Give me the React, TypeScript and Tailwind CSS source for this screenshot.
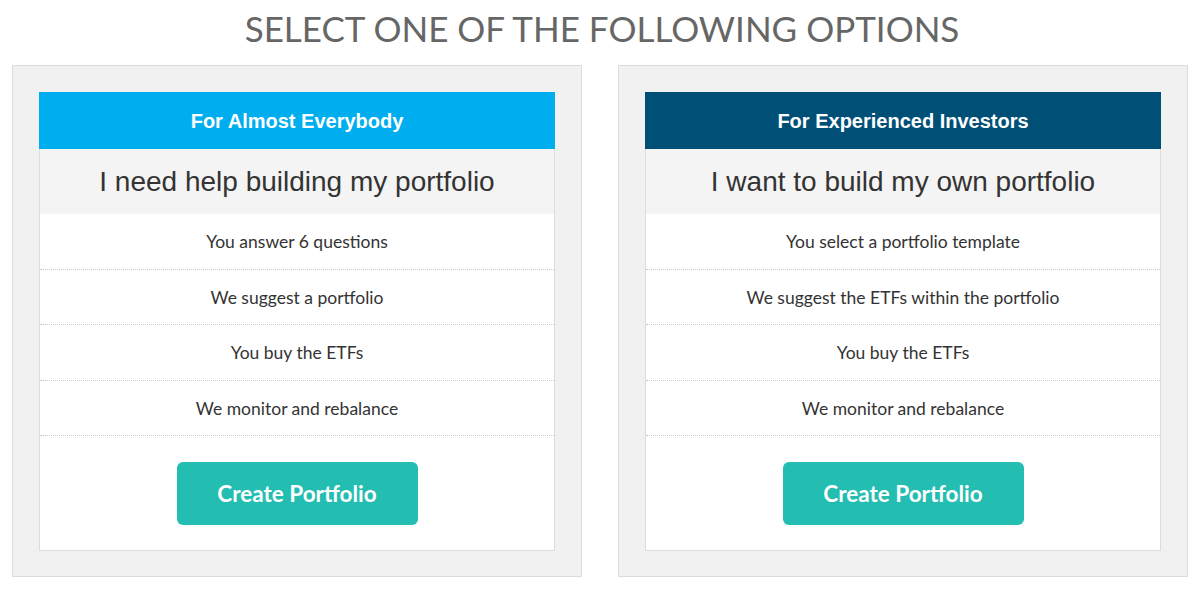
import React from "react";

type Opt = {
  head: string;
  headBg: string;
  title: string;
  items: string[];
};

const opts: Opt[] = [
  {
    head: "For Almost Everybody",
    headBg: "bg-[#00aeef]",
    title: "I need help building my portfolio",
    items: ["You answer 6 questions", "We suggest a portfolio", "You buy the ETFs", "We monitor and rebalance"],
  },
  {
    head: "For Experienced Investors",
    headBg: "bg-[#004f77]",
    title: "I want to build my own portfolio",
    items: [
      "You select a portfolio template",
      "We suggest the ETFs within the portfolio",
      "You buy the ETFs",
      "We monitor and rebalance",
    ],
  },
];

function Panel({ o }: { o: Opt }) {
  return (
    <div className="w-[570px] h-[512px] border border-[#dcdcdc] bg-[#f1f1f1] p-[26px]">
      <div className="h-[459px] border border-[#dcdcdc] bg-white flex flex-col">
        <div
          className={`${o.headBg} h-[57px] -mx-px -mt-px flex items-center justify-center text-white font-bold text-[20px] font-['Liberation_Sans',Arial,sans-serif]`}
        >
          {o.head}
        </div>
        <div className="h-[65px] bg-[#f4f4f4] flex items-center justify-center text-[#333] text-[28px] font-['Liberation_Sans',Arial,sans-serif]">
          {o.title}
        </div>
        {o.items.map((t) => (
          <div
            key={t}
            className="h-[55.5px] flex items-center justify-center pt-[2px] border-b border-dotted border-[#c8c8c8] text-[#333] text-[17.5px] font-['Lato',sans-serif]"
          >
            {t}
          </div>
        ))}
        <div className="flex-1 flex items-center justify-center pt-[1px]">
          <button className="w-[241px] h-[63px] rounded-[6px] bg-[#23bdb1] text-white font-bold text-[22.5px] font-['Lato',sans-serif]">
            Create Portfolio
          </button>
        </div>
      </div>
    </div>
  );
}

export default function App() {
  return (
    <div className="w-[1204px] h-[591px] bg-white">
      <div className="h-[65px] flex items-center justify-center pb-[8px] text-[#666] text-[35px] font-['Lato',sans-serif]">
        SELECT ONE OF THE FOLLOWING OPTIONS
      </div>
      <div className="flex gap-[36px] pl-[12px]">
        {opts.map((o) => (
          <Panel key={o.head} o={o} />
        ))}
      </div>
    </div>
  );
}
